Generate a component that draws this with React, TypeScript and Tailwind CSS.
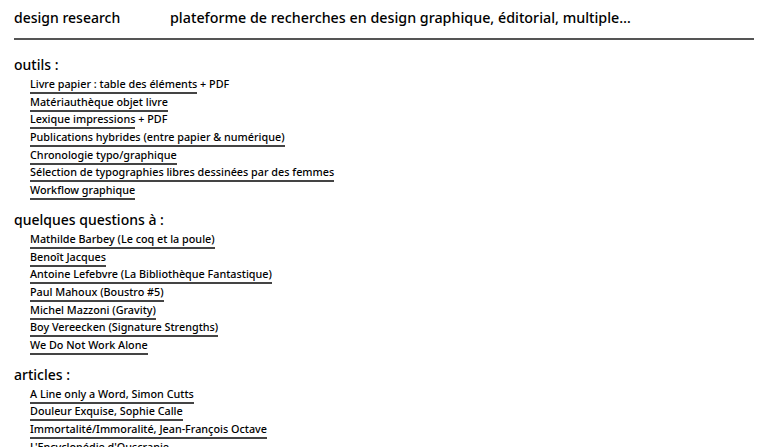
import type React from "react"

type Item = { label: string; extra?: string }

const outils: Item[] = [
  { label: "Livre papier : table des éléments", extra: "+ PDF" },
  { label: "Matériauthèque objet livre" },
  { label: "Lexique impressions", extra: "+ PDF" },
  { label: "Publications hybrides (entre papier & numérique)" },
  { label: "Chronologie typo/graphique" },
  { label: "Sélection de typographies libres dessinées par des femmes" },
  { label: "Workflow graphique" },
]

const questions: Item[] = [
  { label: "Mathilde Barbey (Le coq et la poule)" },
  { label: "Benoît Jacques" },
  { label: "Antoine Lefebvre (La Bibliothèque Fantastique)" },
  { label: "Paul Mahoux (Boustro #5)" },
  { label: "Michel Mazzoni (Gravity)" },
  { label: "Boy Vereecken (Signature Strengths)" },
  { label: "We Do Not Work Alone" },
]

const articles: Item[] = [
  { label: "A Line only a Word, Simon Cutts" },
  { label: "Douleur Exquise, Sophie Calle" },
  { label: "Immortalité/Immoralité, Jean-François Octave" },
  { label: "L'Encyclopédie d'Ouscranie" },
]

const Section: React.FC<{ title: string; items: Item[] }> = ({ title, items }) => (
  <section className="mb-[11px]">
    <h2 className="text-[14px] leading-[18px] font-medium text-black">{title}</h2>
    <ul className="pl-[16px] pt-[2px]">
      {items.map((it) => (
        <li key={it.label} className="h-[17.7px] text-[10.8px] leading-[15px] font-medium text-black">
          <a href="#" className="border-b-2 border-[#444] pb-[1px]">
            {it.label}
          </a>
          {it.extra && <span> {it.extra}</span>}
        </li>
      ))}
    </ul>
  </section>
)

export default function App() {
  return (
    <div className="min-h-screen bg-white px-[14px] font-['Noto_Sans',sans-serif] text-black">
      {/* header */}
      <header className="flex items-end h-[40px] pb-[10px] border-b-2 border-[#555] w-[740px]">
        <div className="w-[156px] text-[14px] font-medium">design research</div>
        <div className="text-[14.3px] font-medium">
          plateforme de recherches en design graphique, éditorial, multiple…
        </div>
      </header>

      <main className="pt-[16px]">
        <Section title="outils :" items={outils} />
        <Section title="quelques questions à :" items={questions} />
        <Section title="articles :" items={articles} />
      </main>
    </div>
  )
}
